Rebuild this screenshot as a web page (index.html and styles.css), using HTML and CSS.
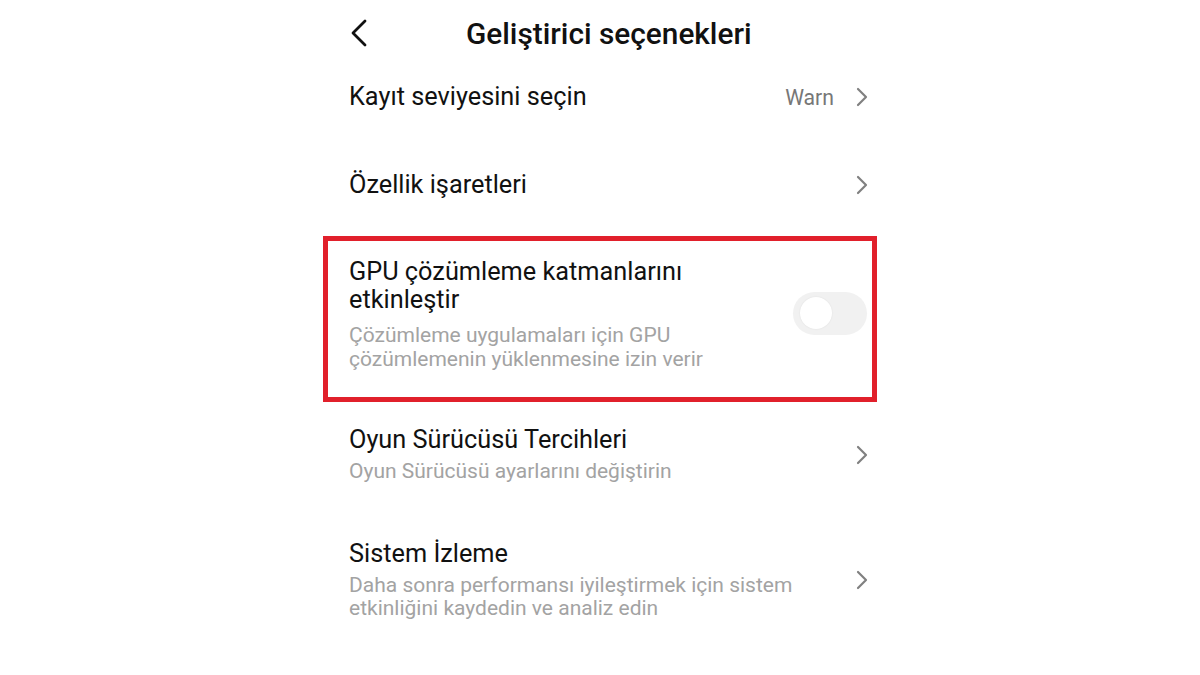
FILE: index.html
```html
<!DOCTYPE html>
<html lang="tr">
<head>
<meta charset="utf-8">
<title>Geliştirici seçenekleri</title>
<link rel="stylesheet" href="styles.css">
</head>
<body>
<div class="screen">
  <header class="header">
    <svg class="back" width="18" height="28" viewBox="0 0 18 28"><path d="M15 2 L3 14 L15 26" fill="none" stroke="#111" stroke-width="2.8" stroke-linecap="round" stroke-linejoin="round"/></svg>
    <h1 class="title">Geliştirici seçenekleri</h1>
  </header>

  <div class="row simple">
    <div class="text"><div class="item-title">Kayıt seviyesini seçin</div></div>
    <div class="value">Warn</div>
    <svg class="chev" width="14" height="20" viewBox="0 0 14 20"><path d="M3 2 L11 10 L3 18" fill="none" stroke="#808080" stroke-width="2.2" stroke-linecap="round" stroke-linejoin="round"/></svg>
  </div>

  <div class="row simple second">
    <div class="text"><div class="item-title">Özellik işaretleri</div></div>
    <svg class="chev" width="14" height="20" viewBox="0 0 14 20"><path d="M3 2 L11 10 L3 18" fill="none" stroke="#808080" stroke-width="2.2" stroke-linecap="round" stroke-linejoin="round"/></svg>
  </div>

  <div class="highlight">
    <div class="row boxed">
      <div class="text">
        <div class="item-title">GPU çözümleme katmanlarını<br>etkinleştir</div>
        <div class="item-sub">Çözümleme uygulamaları için GPU<br>çözümlemenin yüklenmesine izin verir</div>
      </div>
      <div class="toggle"><div class="knob"></div></div>
    </div>
  </div>

  <div class="row detail">
    <div class="text">
      <div class="item-title">Oyun Sürücüsü Tercihleri</div>
      <div class="item-sub">Oyun Sürücüsü ayarlarını değiştirin</div>
    </div>
    <svg class="chev" width="14" height="20" viewBox="0 0 14 20"><path d="M3 2 L11 10 L3 18" fill="none" stroke="#808080" stroke-width="2.2" stroke-linecap="round" stroke-linejoin="round"/></svg>
  </div>

  <div class="row detail">
    <div class="text">
      <div class="item-title">Sistem İzleme</div>
      <div class="item-sub">Daha sonra performansı iyileştirmek için sistem<br>etkinliğini kaydedin ve analiz edin</div>
    </div>
    <svg class="chev" width="14" height="20" viewBox="0 0 14 20"><path d="M3 2 L11 10 L3 18" fill="none" stroke="#808080" stroke-width="2.2" stroke-linecap="round" stroke-linejoin="round"/></svg>
  </div>
</div>
</body>
</html>
```

FILE: styles.css
```css
html, body {
  margin: 0;
  padding: 0;
  background: #ffffff;
}
body {
  font-family: Roboto, "Noto Sans", "Liberation Sans", sans-serif;
  color: #111111;
  width: 1200px;
  height: 675px;
  overflow: hidden;
}
.screen {
  width: 520px;
  margin-left: 349px;
  display: flex;
  flex-direction: column;
}
.header {
  height: 66px;
  display: flex;
  align-items: center;
}
.back {
  margin-left: 1px;
}
.title {
  margin: 0 0 0 98px;
  font-size: 29.8px;
  font-weight: 500;
  color: #111;
}
.row {
  display: flex;
  align-items: center;
}
.simple {
  height: 62px;
}
.simple.second {
  margin-top: 26px;
}
.text {
  flex: 1;
}
.item-title {
  font-size: 25.3px;
  line-height: 28px;
  color: #111;
}
.item-sub {
  font-size: 21px;
  line-height: 24px;
  color: #a3a3a3;
}
.value {
  font-size: 21.2px;
  color: #777;
  margin-right: 21px;
}
.chev {
  flex: none;
}
.highlight {
  margin: 20px 0 0 -26px;
  width: 554px;
  height: 166px;
  box-sizing: border-box;
  border: 5px solid #e1202b;
}
.boxed {
  padding: 17px 5px 0 21px;
}
.boxed .item-sub {
  margin-top: 9px;
}
.toggle {
  flex: none;
  width: 74px;
  height: 43px;
  border-radius: 22px;
  background: #f1f1f1;
  display: flex;
  align-items: center;
  padding-left: 7px;
  box-sizing: border-box;
  margin-top: -3px;
}
.knob {
  width: 32px;
  height: 32px;
  border-radius: 50%;
  background: #ffffff;
  box-shadow: 0 0 2px rgba(0,0,0,0.08);
}
.detail {
  padding-top: 24px;
  padding-bottom: 33px;
}
.detail .item-sub {
  margin-top: 6px;
  line-height: 23px;
}
```
